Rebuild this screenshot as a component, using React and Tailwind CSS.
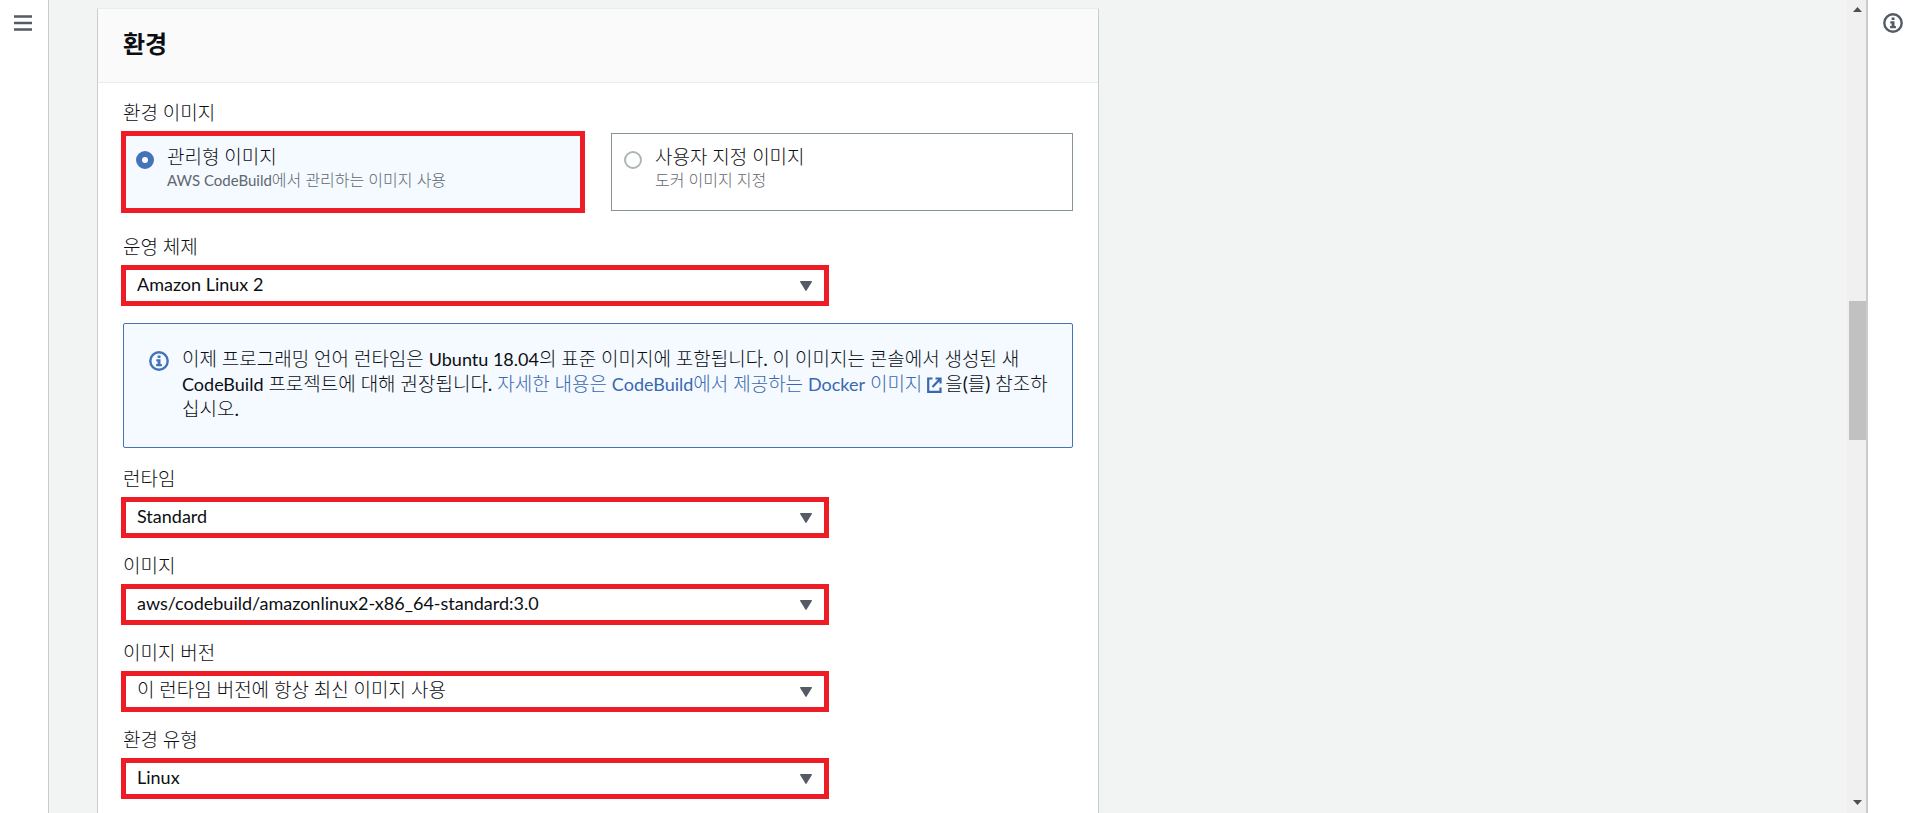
import React from "react";

const FIELDS = [
  { id: "runtime", label: "런타임", value: "Standard", latin: true },
  { id: "image", label: "이미지", value: "aws/codebuild/amazonlinux2-x86_64-standard:3.0", latin: true },
  { id: "image-version", label: "이미지 버전", value: "이 런타임 버전에 항상 최신 이미지 사용" },
  { id: "environment-type", label: "환경 유형", value: "Linux", latin: true },
];

function InfoIcon({ className }) {
  return (
    <svg viewBox="0 0 20 20" className={className} aria-hidden="true">
      <circle cx="10" cy="10" r="8.7" fill="none" stroke="currentColor" strokeWidth="2.4" />
      <path d="M8.6 4.6h2.9v2.5H8.600zM7.300 8.300h4.200v4.800h1.400v2.200H7.100v-2.200h1.500v-2.600H7.300z" fill="currentColor" />
    </svg>
  );
}

function ExternalIcon() {
  return (
    <svg viewBox="0 0 15 16" className="mr-[3px] inline-block h-4 w-[15px] align-[-2px]" fill="none" stroke="currentColor" strokeWidth="2.200" aria-hidden="true">
      <path d="M5.500 1.500H1.200V14.800h12.300V10.500M8.500 1.500h5V6.500M13.500 1.500L5.500 10" />
    </svg>
  );
}

function SelectField({ id, label, value, latin }) {
  return (
    <div className="flex max-w-[708px] flex-col gap-1">
      <label htmlFor={id} className="pl-[2px] leading-7">{label}</label>
      <div className="relative">
        <select
          id={id}
          defaultValue={value}
          className={
            latin
              ? "block h-[41px] w-full appearance-none border-[5px] border-[#ee1c24] bg-white pr-12 pb-[2px] pl-[11px] text-[18px] outline-none"
              : "block h-[41px] w-full appearance-none border-[5px] border-[#ee1c24] bg-white pr-12 pb-[2px] pl-[11px] outline-none"
          }
        >
          <option>{value}</option>
        </select>
        <svg viewBox="0 0 12 10" className="pointer-events-none absolute top-4 right-[17px] h-[10px] w-3 fill-[#545b64]" aria-hidden="true">
          <path d="M0 .8Q0 0 .8 0H11.200Q12 0 12 .8L6.600 9.500Q6 10.300 5.400 9.500z" />
        </svg>
      </div>
    </div>
  );
}

function Tile({ title, description, checked }) {
  return (
    <label
      className={
        checked
          ? "flex gap-[13px] border-[5px] border-[#ee1c24] bg-[#f4faff] px-[10px] pt-[9px]"
          : "my-[2px] mr-[2px] flex gap-[13px] border border-[#879596] bg-white px-3 pt-[11px]"
      }
    >
      <input
        type="radio"
        name="environment-image"
        defaultChecked={checked}
        className="mt-[6px] size-[18px] shrink-0 appearance-none rounded-full border-2 border-[#aab7b8] bg-white checked:border-[6px] checked:border-[#4573b7]"
      />
      <span className="flex flex-col">
        <span className="leading-6">{title}</span>
        <span className="text-base leading-[22px] text-[#5f676f]">{description}</span>
      </span>
    </label>
  );
}

function ScrollArrow({ down }) {
  return (
    <svg viewBox="0 0 9 5" className="h-[5px] w-[9px] fill-[#4f4f4f]" aria-hidden="true">
      <path d={down ? "M0 0h9L4.500 5z" : "M0 5h9L4.500 0z"} />
    </svg>
  );
}

export default function App() {
  return (
    <div className="flex h-screen overflow-hidden bg-[#f2f4f4] font-[Lato,'Noto_Sans_CJK_KR_Light','Noto_Sans_CJK_KR',sans-serif] text-[19px] text-[#0c0e13]">
      <nav className="flex w-[49px] shrink-0 justify-center border-r border-[#c9cccf] bg-white pt-[14px] pr-[2px]">
        <button type="button" aria-label="메뉴" className="h-[18px] w-[18px] text-[#545b64]">
          <svg viewBox="0 0 18 18" className="h-[18px] w-[18px]" stroke="currentColor" strokeWidth="2.400" aria-hidden="true">
            <path d="M0 2.500h18M0 9h18M0 15.500h18" />
          </svg>
        </button>
      </nav>

      <main className="flex-1 overflow-hidden pt-2 pl-12">
        <section className="h-screen max-w-[1002px] border border-t-[#eaeded] border-r-[#c8cdce] border-l-[#c8cdce] bg-white">
          <header className="border-b border-[#eaeded] bg-[#fafafa] px-[25px] pt-[18px] pb-[22px]">
            <h2 className="font-[Lato,'Noto_Sans_CJK_KR',sans-serif] text-2xl leading-[33px] font-bold">환경</h2>
          </header>
          <form className="px-[23px] pt-4">
            <fieldset>
              <legend className="pl-[2px] leading-7">환경 이미지</legend>
              <div className="mt-1 grid h-[82px] grid-cols-2 gap-[26px]">
                <Tile
                  checked
                  title="관리형 이미지"
                  description={<><span className="text-[15px] leading-none">AWS CodeBuild</span>에서 관리하는 이미지 사용</>}
                />
                <Tile title="사용자 지정 이미지" description="도커 이미지 지정" />
              </div>
            </fieldset>

            <div className="mt-5">
              <SelectField id="operating-system" label="운영 체제" value="Amazon Linux 2" latin />
            </div>

            <div role="note" className="mx-[2px] mt-[17px] mb-[17px] flex gap-[13px] rounded-[2px] border border-[#4573b7] bg-[#f4faff] pt-[22px] pr-6 pb-[26px] pl-[25px]">
              <InfoIcon className="mt-[5px] size-5 shrink-0 text-[#4573b7]" />
              <p className="leading-[25px]">
                이제 프로그래밍 언어 런타임은 <span className="text-[18px] leading-none">Ubuntu 18.04</span>의 표준 이미지에 포함됩니다. 이 이미지는 콘솔에서 생성된 새{" "}
                <span className="text-[18px] leading-none">CodeBuild</span> 프로젝트에 대해 권장됩니다.{" "}
                <a href="#docker-images" className="text-[#3a68ae]">
                  자세한 내용은 <span className="text-[18px] leading-none">CodeBuild</span>에서 제공하는 <span className="text-[18px] leading-none">Docker</span> 이미지 <ExternalIcon />
                </a>
                을(를) 참조하십시오.
              </p>
            </div>

            <div className="flex flex-col gap-[14px]">
              {FIELDS.map((field) => (
                <SelectField key={field.id} {...field} />
              ))}
            </div>
          </form>
        </section>
      </main>

      <div className="flex w-[19px] shrink-0 flex-col items-center bg-[#f0f0f0] pt-[7px] pb-2 pl-[2px]" aria-hidden="true">
        <ScrollArrow />
        <div className="flex w-full flex-1 flex-col">
          <div className="grow-[289]" />
          <div className="grow-[139] bg-[#c1c1c1]" />
          <div className="grow-[360]" />
        </div>
        <ScrollArrow down />
      </div>

      <aside className="flex w-[50px] shrink-0 justify-center border-l-2 border-[#c9cccf] bg-white pt-[13px] pl-[2px]">
        <button type="button" aria-label="정보" className="size-5 text-[#545b64]">
          <InfoIcon className="size-5" />
        </button>
      </aside>
    </div>
  );
}
